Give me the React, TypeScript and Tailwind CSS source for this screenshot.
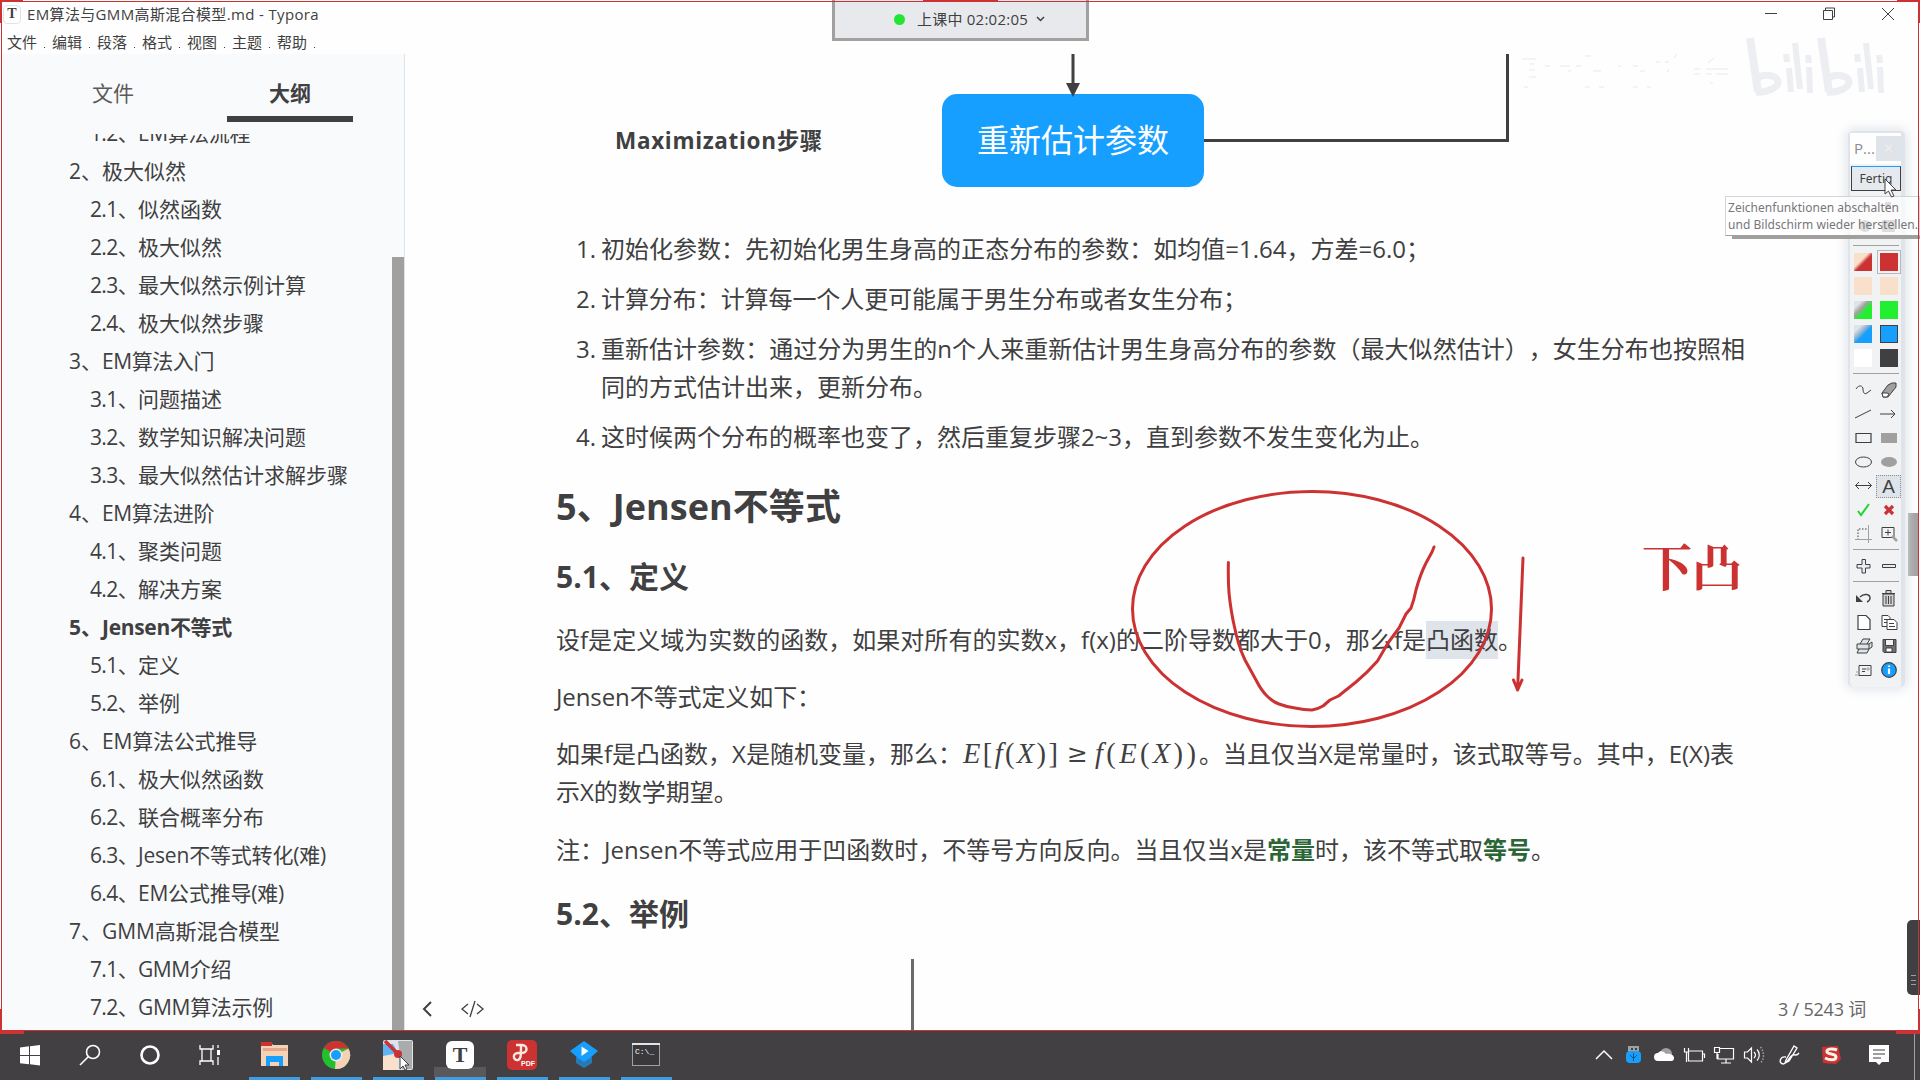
import React, { useLayoutEffect, useRef, useState } from "react";

const UI = "font-['Open_Sans','Noto_Sans_CJK_SC',sans-serif]";

/* Spreads a single line of text over a given width by adjusting its tracking. */
function Fit({ w, text, className = "" }: { w: number; text: string; className?: string }) {
  const ref = useRef<HTMLSpanElement>(null);
  const [ls, setLs] = useState(0);
  useLayoutEffect(() => {
    if (ref.current) {
      const natural = ref.current.getBoundingClientRect().width;
      setLs((w - natural) / text.length);
    }
  }, [w, text]);
  return (
    <span ref={ref} className={"inline-block whitespace-pre " + className} style={{ letterSpacing: ls }}>
      {text}
    </span>
  );
}

type Item = { n: string; t: string; w: number; top?: boolean; bold?: boolean };
const outline: Item[] = [
  { n: "1.2、", t: "EM算法流程", w: 112 },
  { n: "2、", t: "极大似然", w: 84, top: true },
  { n: "2.1、", t: "似然函数", w: 84 },
  { n: "2.2、", t: "极大似然", w: 84 },
  { n: "2.3、", t: "最大似然示例计算", w: 168 },
  { n: "2.4、", t: "极大似然步骤", w: 126 },
  { n: "3、", t: "EM算法入门", w: 112, top: true },
  { n: "3.1、", t: "问题描述", w: 84 },
  { n: "3.2、", t: "数学知识解决问题", w: 168 },
  { n: "3.3、", t: "最大似然估计求解步骤", w: 210 },
  { n: "4、", t: "EM算法进阶", w: 112, top: true },
  { n: "4.1、", t: "聚类问题", w: 84 },
  { n: "4.2、", t: "解决方案", w: 84 },
  { n: "5、", t: "Jensen不等式", w: 130, top: true, bold: true },
  { n: "5.1、", t: "定义", w: 42 },
  { n: "5.2、", t: "举例", w: 42 },
  { n: "6、", t: "EM算法公式推导", w: 155, top: true },
  { n: "6.1、", t: "极大似然函数", w: 126 },
  { n: "6.2、", t: "联合概率分布", w: 126 },
  { n: "6.3、", t: "Jesen不等式转化(难)", w: 188 },
  { n: "6.4、", t: "EM公式推导(难)", w: 146 },
  { n: "7、", t: "GMM高斯混合模型", w: 178, top: true },
  { n: "7.1、", t: "GMM介绍", w: 93 },
  { n: "7.2、", t: "GMM算法示例", w: 135 },
];

function TitleBar() {
  return (
    <header className="h-[54px] shrink-0 bg-[#fefefe]">
      <div className="flex h-[28px] items-center pl-[3px]">
        <div className="flex h-[19px] w-[18px] items-center justify-center rounded-[4px] border border-[#dfe3ea] bg-white font-['Liberation_Serif',serif] text-[14px] font-bold leading-none">T</div>
        <Fit w={292} text="EM算法与GMM高斯混合模型.md - Typora" className="ml-[6px] text-[15px] leading-[20px]" />
        <svg className="ml-auto mr-[24px]" width="132" height="16" viewBox="0 0 132 16" fill="none" stroke="#403f41">
          <path d="M1 7.500h12M59.500 4.500h9v9h-9zM61.500 4v-2h9v9h-2" />
          <path d="M118 2l12 12M130 2l-12 12" />
        </svg>
      </div>
      <nav className="flex h-[27px] items-center pl-[7px] text-[15px] leading-[20px]">
        {["文件", "编辑", "段落", "格式", "视图", "主题", "帮助"].map((m) => (
          <span key={m} className="flex w-[45px] items-center">
            {m}
            <i className="ml-[7px] mt-[12px] h-px w-px bg-[#403f41]" />
          </span>
        ))}
      </nav>
    </header>
  );
}

function Sidebar() {
  return (
    <aside className="flex h-[976px] w-[405px] shrink-0 flex-col border-r border-[#dfe3ea] bg-[#f9fafb] pl-[2px]">
      <div className="flex h-[81px] shrink-0 text-[21px] leading-[30px]">
        <div className="ml-[48px] w-[126px] pt-[24px] text-center text-[#5b5a5c]">文件</div>
        <div className="ml-[51px] flex h-[68px] w-[126px] flex-col items-center border-b-[6px] border-[#403f41] pt-[24px] font-bold">大纲</div>
      </div>
      <div className="flex min-h-0 flex-1">
        <ul className="-mt-[2px] min-h-0 flex-1 overflow-hidden text-[21px] leading-[38px]">
          {outline.map((o, i) => (
            <li
              key={o.n}
              className={
                "flex h-[38px] whitespace-nowrap " +
                (i === 0 ? "-mt-[19px] [clip-path:inset(20px_0_0_0)] " : "") +
                (o.top ? "pl-[67px] " : "pl-[88px] ") +
                (o.bold ? "font-bold" : "")
              }
            >
              <span className={o.top ? "w-[33px]" : "w-[48px]"}>
                <Fit w={o.top ? 33 : 48} text={o.n} />
              </span>
              <Fit w={o.w} text={o.t} />
            </li>
          ))}
        </ul>
        <div className="mt-[122px] w-[12px] bg-[#a2a09f]" />
      </div>
    </aside>
  );
}

function Diagram() {
  return (
    <div className="flex h-[176px] pl-[210px]">
      <div className="w-[327px] pt-[70px] text-[22.5px] font-bold leading-[34px]"><Fit w={208} text="Maximization步骤" /></div>
      <div className="w-[262px]">
        <svg width="262" height="43" className="relative block" viewBox="0 0 262 43">
          <path d="M131 0v32" stroke="#403f41" strokeWidth="3" />
          <path d="M124 29h14l-7 14z" fill="#403f41" />
        </svg>
        <div className="-mt-[3px] flex h-[93px] items-center justify-center rounded-[15px] bg-[#169fff] pb-px text-[32px] leading-none text-white">重新估计参数</div>
      </div>
      <svg width="320" height="100" viewBox="0 0 320 100" fill="none" stroke="#403f41" strokeWidth="3">
        <path d="M0 86.500H303.500V0" />
      </svg>
    </div>
  );
}

function Formula() {
  return (
    <span className="ml-px inline-flex h-[38px] w-[236px] items-center gap-[9px] align-top font-['Liberation_Serif',serif] text-[28.5px]">
      <span className="flex w-[95px] justify-between"><i>E</i><span>[</span><i>f</i><span>(</span><i>X</i><span>)</span><span>]</span></span>
      <span className="w-[19px] text-center font-['DejaVu_Serif',serif] text-[25px] font-light">≥</span>
      <span className="flex w-[101px] justify-between"><i>f</i><span>(</span><i>E</i><span>(</span><i>X</i><span>)</span><span>)</span></span>
    </span>
  );
}

function Doc() {
  const num = "w-[45px] shrink-0 pr-[5px] text-right";
  return (
    <main className="relative h-[976px] min-w-0 flex-1 overflow-hidden bg-[#fefefe]">
      <Diagram />
      <div className="flex flex-col whitespace-nowrap pl-[151px] text-[24px] leading-[38px]">
        <ol className="flex flex-col gap-[12px]">
          <li className="flex"><span className={num}>1.</span><Fit w={829} text="初始化参数：先初始化男生身高的正态分布的参数：如均值=1.64，方差=6.0；" /></li>
          <li className="flex"><span className={num}>2.</span><Fit w={646} text="计算分布：计算每一个人更可能属于男生分布或者女生分布；" /></li>
          <li className="flex"><span className={num}>3.</span><span><Fit w={1144} text="重新估计参数：通过分为男生的n个人来重新估计男生身高分布的参数（最大似然估计），女生分布也按照相" /><br />同的方式估计出来，更新分布。</span></li>
          <li className="flex"><span className={num}>4.</span><Fit w={833} text="这时候两个分布的概率也变了，然后重复步骤2~3，直到参数不发生变化为止。" /></li>
        </ol>
        <h3 className="mt-[29px] text-[36px] font-bold leading-[44px]"><Fit w={285} text="5、Jensen不等式" /></h3>
        <h4 className="mt-[27px] text-[30px] font-bold leading-[42px]"><Fit w={133} text="5.1、定义" /></h4>
        <p className="mt-[23px] flex">
          <Fit w={870} text="设f是定义域为实数的函数，如果对所有的实数x，f(x)的二阶导数都大于0，那么f是" />
          <span className="bg-[#dfe3ea]">凸函数</span>。
        </p>
        <p className="mt-[19px]"><Fit w={265} text="Jensen不等式定义如下：" /></p>
        <p className="mt-[19px]">
          <Fit w={406} text="如果f是凸函数，X是随机变量，那么：" /><Formula /><Fit w={535} text="。当且仅当X是常量时，该式取等号。其中，E(X)表" />
          <br />示X的数学期望。
        </p>
        <p className="mt-[20px] flex">
          <Fit w={711} text="注：Jensen不等式应用于凹函数时，不等号方向反向。当且仅当x是" />
          <b className="text-[#2c6637]">常量</b><Fit w={168} text="时，该不等式取" /><b className="text-[#2c6637]">等号</b>。
        </p>
        <h4 className="mt-[24px] text-[30px] font-bold leading-[42px]"><Fit w={133} text="5.2、举例" /></h4>
        <div className="ml-[355px] mt-[24px] h-[80px] w-[3px] bg-[#6b6a6b]" />
      </div>
      <div className="absolute bottom-0 left-0 flex h-[43px] w-full items-center pl-[16px] pr-[52px] text-[#666]">
        <svg width="66" height="18" viewBox="0 0 66 18" fill="none" stroke="#403f41">
          <path d="M10 2L3 9l7 7" strokeWidth="2" />
          <path d="M47 4l-6 5 6 5M56 4l6 5-6 5M54 1l-5 16" strokeWidth="1.300" />
        </svg>
        <Fit w={88} text="3 / 5243 词" className="ml-auto text-[18px] leading-[24px]" />
      </div>
      <div className="absolute right-0 top-[459px] h-[63px] w-[10px] bg-[#a2a09f]" />
    </main>
  );
}

const red = "#cd3232";
const cells: React.ReactNode[][] = [
  [<path d="M2 9c3-5 7-3 7 0s1 6 4 4l4-3" />, <g><path d="M3 13l6-8 4-2h4v4l-8 10H4z" fill="#a2a09f" /><path d="M3 13h5l2 1-2 3H4z" fill="#fff" /></g>],
  [<path d="M1 14L17 6" />, <path d="M1 10h15M12 6l4 4-4 4" />],
  [<path d="M2 5.500h15v9H2z" strokeWidth="1.200" />, <path d="M2 5h16v10H2z" fill="#a2a09f" stroke="none" />],
  [<ellipse cx="9.500" cy="10" rx="8" ry="5" />, <ellipse cx="10" cy="10" rx="8" ry="5" fill="#a2a09f" stroke="none" />],
  [<path d="M1.500 9.500h16M5 6L1.500 9.500 5 13M14 6l3.500 3.500L14 13" />, null],
  [<path d="M4 11l3 4L15 4" stroke="#20d52e" strokeWidth="2" />, <path d="M6 6l8 8M14 6l-8 8" stroke={red} strokeWidth="3.200" />],
  [<g><path d="M4 16V5h10" strokeDasharray="1.500 1.500" /><path d="M1 15.500h17M14.500 1v18" stroke="#a2a09f" /></g>, <g><path d="M3 3.500h12v10H3zM6 8.500h6M9 5.500v6" /><path d="M13 12l5 5" stroke="#a2a09f" strokeWidth="2.500" /></g>],
];
const zoomCells: React.ReactNode[][] = [
  [<path d="M8 3.500h3.500v5H16v3.500h-4.500v5H8V12H3V8.500h5z" fill="#e9edf1" />, <path d="M3.500 8.500h13v3h-13z" fill="#e9edf1" />],
];
const fileCells: React.ReactNode[][] = [
  [<g><path d="M6 9c4-4 10-3 10 1 0 2-1 3-3 4" strokeWidth="1.400" /><path d="M2 7v7h7z" fill="#403f41" stroke="none" /></g>, <g><path d="M4 6h11v12H4zM3 5.500h13M7 5V2.500h5V5" fill="#d0d2d4" /><path d="M7 8v8M9.500 8v8M12 8v8" /></g>],
  [<path d="M4 3.500h8l4 4v10H4z" fill="#fff" strokeWidth="1.200" />, <g><path d="M3 3.500h6l2 2v9H3zM5 7.500h4M5 10.500h4" fill="#fff" /><path d="M8 7.500h7l3 3v7H8zM10 11.500h5M10 14.500h6" fill="#fff" /></g>],
  [<g><path d="M6 8l3-5h7l-3 5M3 8h12v5H3zM15 8l3-2v5l-3 2M5 13l-2 4h10l2-4" fill="#dfe3ea" /></g>, <g><path d="M4 3.500h13v13H5l-1-1z" fill="#706f71" /><path d="M6.500 3.500h8v6h-8z" fill="#f0f2f4" /><path d="M7 12h6v4H7z" fill="#fff" /></g>],
  [<g><path d="M5 5.500h12v10H5z" fill="#f0f2f4" /><path d="M8 9h4M8 11.500h3" /><path d="M1 15h4M2 12h3M13 8h2v2h-2z" stroke="#a2a09f" /></g>, <g><circle cx="10" cy="10" r="7.300" fill="#169fff" strokeWidth="1.200" /><path d="M10 8.500V14M10 5.500v1.500" stroke="#fff" strokeWidth="2.200" /></g>],
];

function Rows({ data }: { data: React.ReactNode[][] }) {
  return (
    <>
      {data.map((r, i) => (
        <div key={i} className="flex h-[24px] items-center">
          {r.map((c, j) =>
            c === null ? (
              <div key={j} className="ml-[2px] flex h-[23px] w-[25px] items-center justify-center border border-dotted border-[#8d8c8d] bg-[#dfe3ea] font-['Liberation_Sans',sans-serif] text-[19px] leading-none">A</div>
            ) : (
              <svg key={j} width="20" height="20" viewBox="0 0 20 20" fill="none" stroke="#403f41" className={j === 0 ? "ml-[4px]" : "ml-[5px]"}>{c}</svg>
            ),
          )}
        </div>
      ))}
    </>
  );
}

function DrawPanel() {
  const rule = "ml-[3px] h-px w-[46px] shrink-0 bg-[#a2a09f]";
  const swatches: [string, string][] = [
    ["bg-[linear-gradient(135deg,#f8e0cb_40%,#cd3232_55%)]", "bg-[#cd3232] outline outline-1 outline-offset-2 outline-[#b7b8bb]"],
    ["bg-[#f8e0cb]", "bg-[#f8e0cb]"],
    ["bg-[linear-gradient(135deg,#dfe3ea_20%,#a2a09f_40%,#22ef30_60%)]", "bg-[#22ef30]"],
    ["bg-[linear-gradient(135deg,#dfe3ea_20%,#8fb3d0_40%,#169fff_55%)]", "bg-[#169fff] border border-[#403f41]"],
    ["bg-white", "bg-[#403f41]"],
  ];
  return (
    <section className="absolute left-[1848px] top-[131px] flex h-[556px] w-[57px] flex-col rounded-[5px] border-x-2 border-t-2 border-[#dfe3ea] border-r-[4px] bg-[#f1f2f4] shadow-[0_0_12px_2px_#dfe3ea]">
      <div className="flex h-[31px] shrink-0 items-center justify-between bg-[#fefefe] pl-[4px]">
        <span className="text-[15px] text-[#8d8c8d]">P...</span>
        <span className="flex h-[25px] w-[25px] items-center justify-center bg-[#dfe3ea] text-[13px] text-[#f3ece6]">✕</span>
      </div>
      <div className="ml-px mt-[2px] flex h-[25px] w-[50px] shrink-0 items-center justify-center border border-[#403f41] border-t-[#169fff] bg-[#e6e9ee] font-['Noto_Sans',sans-serif] text-[12px] leading-none">Fertig</div>
      <div className="flex h-[54px] shrink-0 flex-wrap items-center justify-around pt-[6px] text-[#a2a09f]">
        <svg width="46" height="44" viewBox="0 0 46 44" fill="#8d8c8d"><path d="M8 9l4-5 4 5zM32 3h6v6h-6z" /><circle cx="12" cy="27" r="6" /><path d="M29 21h13v12H29z" /></svg>
      </div>
      <div className={rule} />
      <div className="flex h-[127px] shrink-0 flex-col pt-[4px]">
        {swatches.map(([a, b], i) => (
          <div key={i} className="flex h-[24px] items-center pl-[4px]">
            <i className={"h-[18px] w-[18px] " + a} />
            <i className={"ml-[8px] h-[18px] w-[18px] " + b} />
          </div>
        ))}
      </div>
      <div className={rule} />
      <div className="h-[175px] shrink-0 pt-[4px]"><Rows data={cells} /></div>
      <div className={rule} />
      <div className="h-[31px] shrink-0 pt-[4px]"><Rows data={zoomCells} /></div>
      <div className={rule} />
      <div className="shrink-0 pt-[4px]"><Rows data={fileCells} /></div>
    </section>
  );
}

function Overlays() {
  return (
    <>
      <section className="absolute left-[832px] top-0 flex h-[41px] w-[257px] items-center border-[3px] border-t-0 border-[#a2a09f] bg-[#e8e9ec] pl-[59px] text-[15px] leading-[20px]">
        <i className="h-[11px] w-[11px] rounded-full bg-[#22e535]" />
        <Fit w={111} text="上课中 02:02:05" className="ml-[12px]" />
        <svg className="ml-[8px]" width="9" height="6" viewBox="0 0 9 6" fill="none" stroke="#403f41" strokeWidth="1.500"><path d="M1 1l3.500 3.500L8 1" /></svg>
      </section>

      <svg className="pointer-events-none absolute left-[1520px] top-[34px]" width="370" height="66" viewBox="0 0 370 66" fill="none" stroke="#e6e9ee">
        <path d="M2 25h14M9 30h5M9 36h6M9 43h7M4 53h4M25 32h5M40 32h10M56 32h5M48 37h3M65 22h6M73 37h8M65 53h5M79 53h5M98 32h3M113 32h5M120 37h5M113 53h5M127 53h4M136 28h4M145 28h4M147 38l2-3M154 24l3-4M174 35h6M174 40h6M186 35h22M186 40h6M196 40h12M188 29l6-5M190 49h3" />
        <g strokeWidth="8" stroke="#eceef2">
          <path d="M230 4l8 54" /><path d="M301 4l8 54" />
          <path d="M236 45c8-6 20-4 22 2 1 7-12 12-22 11" strokeWidth="7" /><path d="M307 45c8-6 20-4 22 2 1 7-12 12-22 11" strokeWidth="7" />
          <path d="M266 20l1 8M269 34l2 24M275 9l5 46M288 21l1 8M289 33l1 26" strokeWidth="6" />
          <path d="M337 20l1 8M340 34l2 24M346 9l5 46M359 21l1 8M360 33l1 26" strokeWidth="6" />
        </g>
      </svg>

      <DrawPanel />

      <svg className="pointer-events-none absolute left-0 top-0" width="1920" height="1031" viewBox="0 0 1920 1031" fill="none" stroke="#cd3232" strokeWidth="3" strokeLinejoin="round" strokeLinecap="round">
        <ellipse cx="1312" cy="609" rx="179.500" ry="117.500" />
        <path d="M1228.400 562.500Q1228 580 1229 593Q1231 612 1234.500 627Q1238 645 1245 660L1256 680Q1261 690 1267 696Q1273 702 1279 704Q1287 707 1295 708Q1304 710 1312 710Q1318 709 1323 706L1330 700L1338.500 696L1356 682Q1368 672 1377.500 661L1388 643L1399 628L1406 614L1411 608Q1414 600 1416 590Q1420 575 1426 563L1432 552L1434 547" />
        <path d="M1523 558L1517.600 690M1513.500 680L1517.600 690L1522 680" />
      </svg>
      <span className="pointer-events-none absolute left-[1642px] top-[533px] font-['Noto_Serif_CJK_SC','Noto_Sans_CJK_SC',serif] text-[50px] font-bold leading-[62px] text-[#cd3232]">下凸</span>

      <div className="absolute left-[1725px] top-[196px] h-[40px] w-[195px] overflow-hidden whitespace-nowrap border border-[#d0d5dd] border-b-[#a2a09f] bg-white/70 pl-[2px] pt-[2px] font-['Noto_Sans',sans-serif] text-[12px] leading-[17px] text-[#77767a]">
        <Fit w={171} text="Zeichenfunktionen abschalten" /><br /><Fit w={190} text="und Bildschirm wieder herstellen." />
      </div>
      <i className="absolute left-[1732px] top-[236px] h-[3px] w-[188px] bg-[#a2a09f]" />
      <svg className="absolute left-[1884px] top-[178px]" width="14" height="21" viewBox="0 0 14 21" fill="#fff" stroke="#403f41"><path d="M1 1v15l3.500-3 3 6 2.500-1-3-6h5z" /></svg>

      <div className="absolute left-[1907px] top-[920px] flex h-[75px] w-[13px] items-end justify-center rounded-l-[5px] bg-[#403f41] pb-[10px]">
        <i className="flex h-[10px] w-[5px] flex-col justify-between border-y border-[#a2a09f]"><i className="my-auto h-px bg-[#a2a09f]" /></i>
      </div>

      <div className="pointer-events-none absolute left-0 top-0 h-[1031px] w-[1920px]">
        <div className="absolute inset-x-0 top-px h-px bg-[#cd3232]" />
        <div className="absolute inset-y-0 left-px w-px bg-[#cd3232]" />
        <div className="absolute inset-y-0 right-px w-px bg-[#cd3232]" />
        <div className="absolute inset-x-0 bottom-0 h-px bg-[#cd3232]" />
        <div className="absolute left-0 top-0 h-[23px] w-[23px] border-l-2 border-t-2 border-[#cd3232]" />
        <div className="absolute right-0 top-0 h-[23px] w-[23px] border-r-2 border-t-2 border-[#cd3232]" />
        <div className="absolute left-[923px] top-0 h-[2px] w-[75px] bg-[#cd3232]" />
        <div className="absolute -bottom-[3px] left-0 h-[25px] w-[24px] border-b-4 border-l-2 border-[#cd3232]" />
        <div className="absolute -bottom-[3px] right-0 h-[25px] w-[24px] border-b-4 border-r-2 border-[#cd3232]" />
      </div>
    </>
  );
}

const apps: React.ReactNode[] = [
  <g><path d="M2 6V2h10l2 3h15v21H2z" fill="#f3d3b8" /><path d="M2 2h11v4H2z" fill="#cd3232" /><path d="M4 8h24v3H4z" fill="#e8a58a" /><path d="M7 16h17v10h-4v-4h-9v4H7z" fill="#169fff" /></g>,
  <g><circle cx="15" cy="15" r="14" fill="#20c030" /><path d="M15 15L3 8A14 14 0 0 1 27.500 8.500H15z" fill="#cd3232" /><path d="M15 15L27.500 8.500A14 14 0 0 1 14 29z" fill="#f3d1b4" /><circle cx="15" cy="15" r="6.500" fill="#f8e9dc" /><circle cx="15" cy="15" r="5" fill="#169fff" /></g>,
  <g><rect width="30" height="30" rx="2" fill="#dfe3ea" /><path d="M0 16h15v14H0z" fill="#f8e0cb" /><path d="M0 4h10l5 9-15 3z" fill="#5eb4f0" /><path d="M15 1h14v28H19z" fill="#a9abad" /><path d="M2 1l13 13" stroke="#cd3232" strokeWidth="3.500" /><circle cx="15" cy="14" r="4" fill="#cd3232" /><path d="M17 16v13l3-3 2 4 2-1-2-4h4z" fill="#fff" stroke="#403f41" /></g>,
  <g><rect x="1" y="1" width="28" height="28" rx="6" fill="#fefefe" /><text x="15" y="22" textAnchor="middle" fontFamily="Liberation Serif" fontWeight="bold" fontSize="22" fill="#403f41">T</text></g>,
  <g><rect width="30" height="30" rx="5" fill="#cd3232" /><path d="M9 5h6c6 0 6 8 0 8h-4c-6 0-5 8 0 7 3-1 3-4 3-15" fill="none" stroke="#fbe9df" strokeWidth="2.400" /><text x="14" y="26" fontFamily="Liberation Sans" fontWeight="bold" fontSize="7" fill="#fff">PDF</text></g>,
  <g><path d="M7 17h16v6l-8 5-8-5z" fill="#2779b8" /><path d="M15 1l14 10-8 7-6 4-6-4-8-7z" fill="#169fff" /><path d="M12.500 6.500l7 4.500-7 5z" fill="#fff" /></g>,
  <g><rect x="1.500" y="3.500" width="27" height="22" fill="#39383a" stroke="#a2a09f" /><path d="M1 4h28" stroke="#dfe3ea" strokeWidth="2" /><text x="4" y="14" fontFamily="Liberation Mono" fontSize="8" fill="#fff">C:\_</text></g>,
];

function Taskbar() {
  return (
    <footer className="flex h-[49px] shrink-0 bg-[#424042]">
      <svg width="243" height="49" viewBox="0 0 243 49" fill="none" stroke="#fefefe" strokeWidth="1.600">
        <path d="M20 16.500l9-1.200V24h-9zM30 15.200L40 14v10H30zM20 25h9v8.300l-9-1.100zM30 25h10v9.500l-10-1.300z" fill="#fff" stroke="none" />
        <circle cx="93" cy="21" r="6.500" /><path d="M88.500 25.500L80 34" />
        <circle cx="150" cy="24" r="8.500" strokeWidth="2.600" />
        <path d="M200 14v4h13v-4M200 34v-4h13v4M202 18v12M211 18v12M218 14v3M218 26v8" strokeWidth="1.300" /><path d="M217 19h3v5h-3z" fill="#fff" stroke="none" />
      </svg>
      <div className="flex">
        {apps.map((a, i) => (
          <div key={i} className={"flex h-[49px] w-[62px] flex-col items-center justify-between pt-[9px] " + (i === 3 ? "bg-[linear-gradient(#59585a,#59585a)] bg-[length:52px_10px] bg-[position:5px_36px] bg-no-repeat" : "")}>
            <svg width="30" height="30" viewBox="0 0 30 30">{a}</svg>
            <i className="h-[3px] w-[51px] bg-[#3f9de0]" />
          </div>
        ))}
      </div>
      <svg className="ml-auto" width="330" height="49" viewBox="1590 1031 330 49" fill="none" stroke="#fefefe" strokeWidth="1.500">
        <path d="M1596 1059l8-8 8 8" />
        <path d="M1628 1046h11v6h-11z" fill="#a2a09f" stroke="none" /><path d="M1631 1048h2v2h-2zM1635 1048h2v2h-2z" fill="#403f41" stroke="none" /><rect x="1626" y="1051" width="15" height="12" rx="4" fill="#169fff" stroke="none" /><path d="M1633.500 1053v8M1630 1055l3 3M1637 1055l-3 3" stroke="#1b4f7c" strokeWidth="1" />
        <circle cx="1666" cy="1054" r="6" fill="#a2a09f" stroke="none" /><path d="M1658 1061a4 4 0 0 1 0-8c2-3 6-2 8 1 4-1 8 1 8 4s-2 3-4 3z" fill="#fefefe" stroke="none" />
        <path d="M1688.500 1051h14v10h-14zM1703 1054h1.500v4M1684.500 1048v4h4v-4M1686.500 1052v10" strokeWidth="1.200" />
        <path d="M1719 1048.500h14.500v10.500h-15.500v-5M1726 1059v4M1721 1063h10M1714.500 1047.500h5v5h-5zM1717 1053v6" strokeWidth="1.200" />
        <path d="M1744.500 1052h3l4-4v14l-4-4h-3zM1754 1052c2 2 2 4 0 6M1757 1049.500c3 3 3 8 0 11" strokeWidth="1.200" /><path d="M1760.500 1047c4 5 4 12 0 16" stroke="#a2a09f" strokeDasharray="1.500 1.500" />
        <path d="M1786 1060l8-14 3 2-8 13-4 2zM1786 1057c-6-1-8 6-3 7 5 0 6-8 10-9 3-1 3 2 6-2" strokeWidth="1.400" />
        <path d="M1822 1047l16-1 3 13-5 5-13-1z" fill="#cd3232" stroke="none" /><path d="M1837 1050c-5-2-11-1-10 2s9 1 9 5-7 3-11 1" stroke="#fbf0e6" strokeWidth="3" />
        <path d="M1869 1045h20v17h-7l-3 3-3-3h-7z" fill="#fefefe" stroke="none" /><path d="M1873 1050h12M1873 1054h12M1873 1058h8" stroke="#403f41" strokeWidth="1.200" />
        <path d="M1914.500 1034v46" stroke="#a2a09f" strokeWidth="1" />
      </svg>
    </footer>
  );
}

export default function App() {
  return (
    <div className={"relative flex h-[1080px] w-[1920px] flex-col overflow-hidden bg-[#fefefe] text-[#403f41] [text-spacing-trim:space-all] " + UI}>
      <TitleBar />
      <div className="flex h-[977px] shrink-0">
        <Sidebar />
        <Doc />
        <div className="w-[2px]" />
      </div>
      <Taskbar />
      <Overlays />
    </div>
  );
}
